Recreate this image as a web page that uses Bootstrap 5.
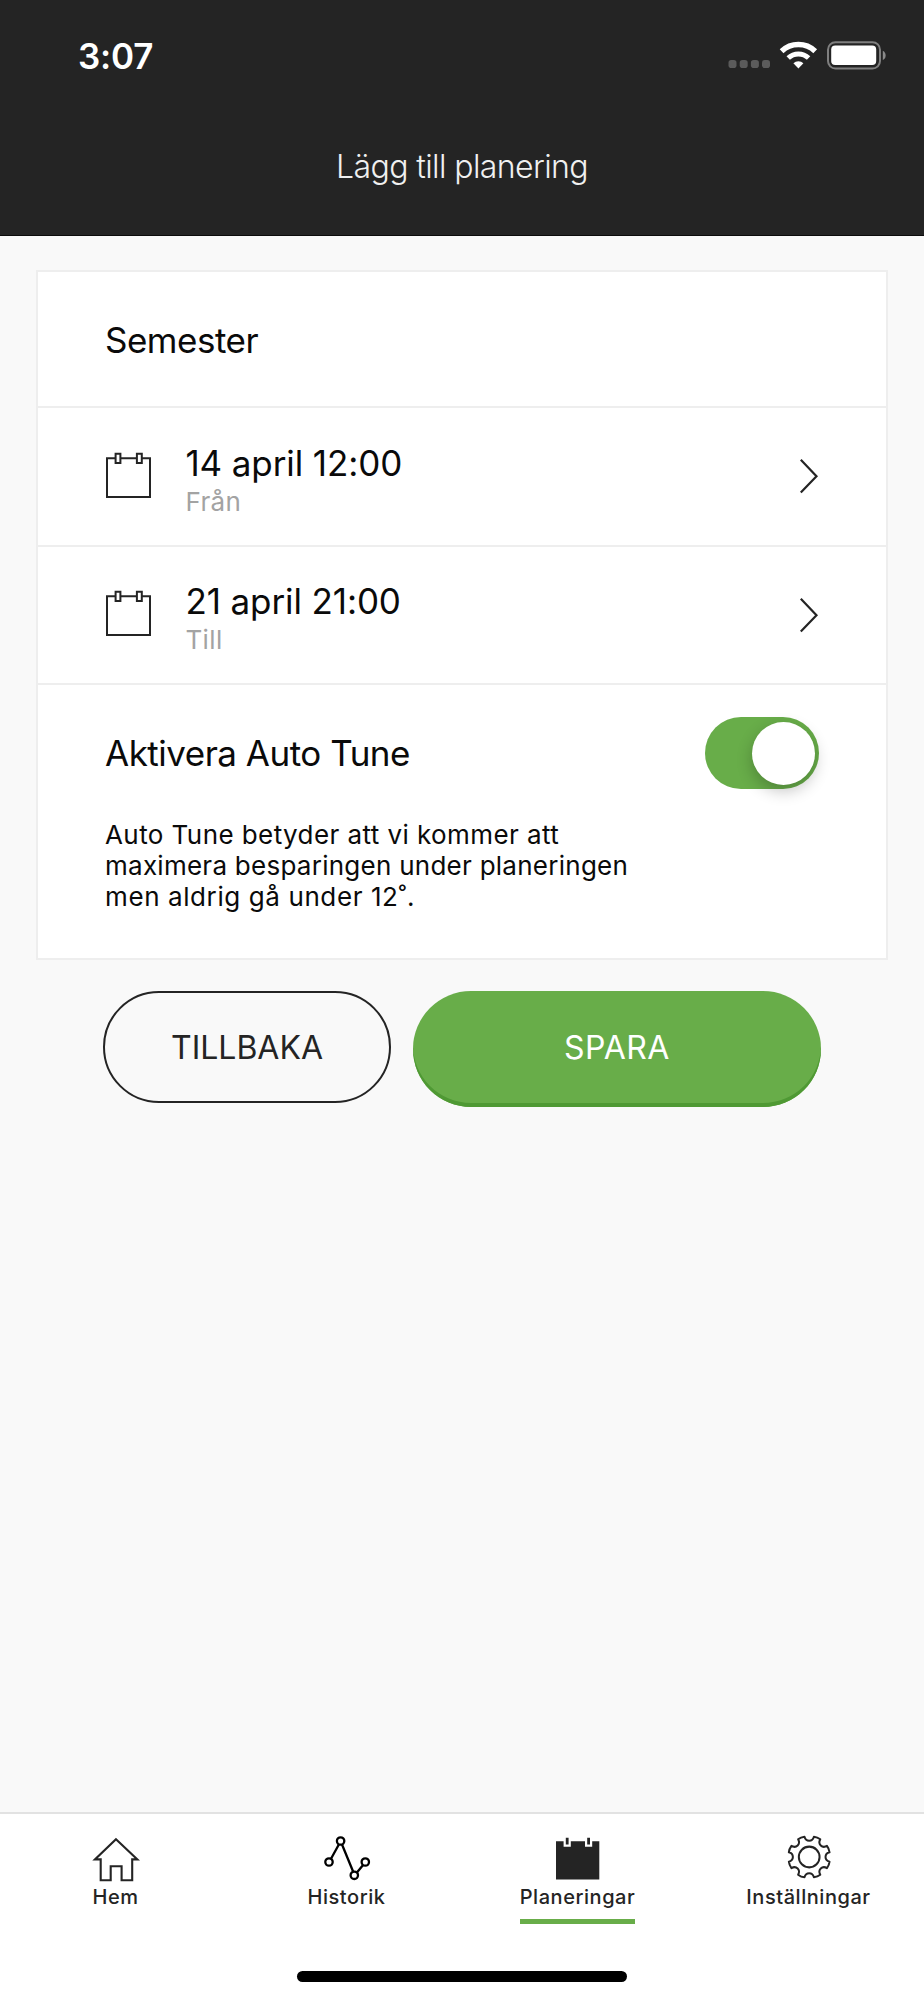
<!DOCTYPE html>
<html lang="sv">
<head>
<meta charset="utf-8">
<meta name="viewport" content="width=device-width, initial-scale=1">
<title>Lägg till planering</title>
<link rel="stylesheet" href="https://cdn.jsdelivr.net/npm/bootstrap@5.3.0/dist/css/bootstrap.min.css">
<style>
  body { font-family: Inter, "Liberation Sans", sans-serif; background: #f9f9f9; color: #0a0a0a; height: 2000px; }
  svg { display: block; flex: none; }
  .app-head { height: 236px; background: #242424; border-bottom: 1px solid #0c0c0c; }
  .status-row { height: 112px; padding: 0 38px 0 78px; }
  .clock { font-size: 35px; font-weight: 600; line-height: 1; letter-spacing: -.2px; }
  .page-title { font-size: 32px; font-weight: 300; line-height: 40px; letter-spacing: -.6px; margin: 35px 0 0; color: #f0f0f0; }
  .plan-card { margin: 34px 36px 0; border: 2px solid #eee; border-radius: 0; background: #fff; }
  .plan-row { border-bottom: 2px solid #eee; padding: 0 67px; }
  .row-name { height: 136px; padding-top: 2px; }
  .row-date { height: 138.5px; }
  .row-tune { height: 273px; padding: 32px 67px 0; }
  .big-text { font-size: 35px; line-height: 42px; }
  .tight { letter-spacing: -.5px; }
  .date-text { letter-spacing: -.1px; }
  .date-col { margin: 7px 0 0 32.4px; }
  .date-icon { margin-bottom: 1px; }
  .sub-text { font-size: 26px; line-height: 32px; letter-spacing: .4px; color: #a3a3a3; margin-top: 2px; }
  .note-text { font-size: 26px; line-height: 31px; letter-spacing: .26px; margin: 30px 0 0; }
  .note-start { letter-spacing: .42px; }
  .note-end { letter-spacing: .6px; }
  .toggle-track { width: 114px; height: 72px; border-radius: 36px; background: #68ad49; padding: 0 4.5px; }
  .toggle-knob { width: 63px; height: 63px; border-radius: 50%; background: #fff; box-shadow: 0 6px 16px rgba(0,0,0,.24); }
  .action-row { padding: 31px 103px 0; gap: 22px; }
  .pill { border: 0; border-radius: 56px; font-size: 32px; padding: 0; height: 112px; }
  .pill-back { width: 288px; border: 2px solid #242424; line-height: 110px; color: #242424; background: transparent; }
  .pill-save { width: 408px; height: 116px; line-height: 114px; padding-bottom: 2px; border-radius: 58px; background: #68ad49; color: #fff; letter-spacing: .5px; box-shadow: inset 0 -4px 0 #4f9934; }
  .tab-bar { height: 188px; border-top: 2px solid #e2e2e2; background: #fff; padding-top: 20px; }
  .tab-name { font-size: 20px; font-weight: 500; line-height: 24px; letter-spacing: .55px; margin-top: 3px; color: #242424; }
  .tab-line { width: 115px; height: 5px; margin-top: 10px; background: #68ad49; }
  .home-bar { width: 330px; height: 11px; margin-bottom: 18px; border-radius: 6px; background: #000; }
</style>
</head>
<body class="d-flex flex-column m-0">

<header class="app-head text-white text-center">
  <div class="status-row d-flex align-items-center justify-content-between">
    <span class="clock">3:07</span>
    <svg width="160" height="32" viewBox="0 0 160 32">
      <g fill="#5b5b5b">
        <rect x="2.5" y="20" width="8" height="8" rx="2.8"/><rect x="13.7" y="20" width="8" height="8" rx="2.8"/>
        <rect x="24.9" y="20" width="8" height="8" rx="2.8"/><rect x="36" y="20" width="8" height="8" rx="2.8"/>
      </g>
      <g fill="none" stroke="#fff">
        <path d="M55.6 11.2 A24.3 24.3 0 0 1 89.2 11.2" stroke-width="5.4"/>
        <path d="M62.2 18 A15 15 0 0 1 82.6 18" stroke-width="5"/>
      </g>
      <path d="M72.4 28.4 L67.4 23.2 A7.2 7.2 0 0 1 77.4 23.2 Z" fill="#fff"/>
      <rect x="102" y="2.2" width="52" height="26.4" rx="7.5" fill="none" stroke="#7f7f7f" stroke-width="2"/>
      <rect x="105.2" y="5.6" width="45" height="19.4" rx="4" fill="#fff"/>
      <path d="M156.8 10.8 C160.6 12.4 160.6 18.4 156.8 20 Z" fill="#8a8a8a"/>
    </svg>
  </div>
  <h1 class="page-title">Lägg till planering</h1>
</header>

<main class="flex-grow-1">
  <section class="plan-card">
    <div class="plan-row row-name d-flex align-items-center"><span class="big-text tight">Semester</span></div>

    <div class="plan-row row-date d-flex align-items-center">
      <svg class="date-icon" width="48" height="48" viewBox="0 0 48 48" fill="none" stroke="#242424" stroke-width="2">
        <path d="M10.6 6.3H2V45H45V6.3H36.8M15.4 6.3H31.9"/><path d="M10.6 1.7H15.4V11H10.6ZM31.9 1.7H36.8V11H31.9Z"/>
      </svg>
      <div class="date-col flex-grow-1">
        <div class="big-text date-text">14 april 12:00</div>
        <div class="sub-text">Från</div>
      </div>
      <svg width="20" height="36" viewBox="0 0 20 36" fill="none" stroke="#242424" stroke-width="2.2"><path d="M1.8 1.8 L17.5 18.2 L1.8 34.6"/></svg>
    </div>

    <div class="plan-row row-date d-flex align-items-center">
      <svg class="date-icon" width="48" height="48" viewBox="0 0 48 48" fill="none" stroke="#242424" stroke-width="2">
        <path d="M10.6 6.3H2V45H45V6.3H36.8M15.4 6.3H31.9"/><path d="M10.6 1.7H15.4V11H10.6ZM31.9 1.7H36.8V11H31.9Z"/>
      </svg>
      <div class="date-col flex-grow-1">
        <div class="big-text date-text">21 april 21:00</div>
        <div class="sub-text">Till</div>
      </div>
      <svg width="20" height="36" viewBox="0 0 20 36" fill="none" stroke="#242424" stroke-width="2.2"><path d="M1.8 1.8 L17.5 18.2 L1.8 34.6"/></svg>
    </div>

    <div class="row-tune">
      <div class="d-flex align-items-center justify-content-between">
        <span class="big-text tight">Aktivera Auto Tune</span>
        <div class="toggle-track d-flex align-items-center justify-content-end" role="switch" aria-checked="true">
          <div class="toggle-knob"></div>
        </div>
      </div>
      <p class="note-text"><span class="note-start">Auto Tune betyder att vi kommer att</span><br>maximera besparingen under planeringen<br><span class="note-end">men aldrig gå under 12˚.</span></p>
    </div>
  </section>

  <div class="action-row d-flex align-items-start">
    <button class="btn pill pill-back">TILLBAKA</button>
    <button class="btn pill pill-save">SPARA</button>
  </div>
</main>

<footer class="tab-bar d-flex flex-column align-items-center">
  <nav class="row g-0 w-100">
    <div class="col-3 d-flex flex-column align-items-center">
      <svg width="48" height="48" viewBox="0 0 48 48" fill="none" stroke="#242424" stroke-width="2.1">
        <path d="M24 5.2 L45.4 25.4 H40.2 V46.3 H29.6 V32.2 H18.7 V46.3 H8.7 V25.4 H2.9 Z"/>
      </svg>
      <span class="tab-name">Hem</span>
    </div>
    <div class="col-3 d-flex flex-column align-items-center">
      <svg width="48" height="48" viewBox="0 0 48 48" fill="none" stroke="#000" stroke-width="2.3">
        <path d="M8 24.8 L16 10.2 M19 10.5 L30.2 37.8 M33.9 38.4 L40.1 30.9"/>
        <circle cx="6" cy="28" r="3.7"/><circle cx="17.6" cy="7" r="3.7"/><circle cx="31.3" cy="41.3" r="3.7"/><circle cx="42.3" cy="28" r="3.7"/>
      </svg>
      <span class="tab-name">Historik</span>
    </div>
    <div class="col-3 d-flex flex-column align-items-center">
      <svg width="48" height="48" viewBox="0 0 48 48">
        <path d="M2 7.3 H9.6 V12.7 H16.8 V7.3 H31 V12.7 H38.2 V7.3 H45.3 V45.5 H2 Z" fill="#242424"/>
        <path d="M11.8 3.8 H14.6 V10.6 H11.8 Z M33.2 3.8 H36 V10.6 H33.2 Z" fill="#242424"/>
      </svg>
      <span class="tab-name">Planeringar</span>
      <div class="tab-line"></div>
    </div>
    <div class="col-3 d-flex flex-column align-items-center">
      <svg width="48" height="48" viewBox="0 0 48 48" fill="none" stroke="#242424" stroke-width="2.1" stroke-linejoin="round">
        <g transform="translate(24.2 23) scale(.96)">
          <path d="M-4.9 -21.2 C-3.4 -15.6 3.4 -15.6 4.9 -21.2 Q8.5 -20.8 11.55 -18.49 C8.63 -13.44 13.44 -8.63 18.49 -11.55 Q20.7 -8.7 21.2 -4.9 C15.6 -3.4 15.6 3.4 21.2 4.9 Q20.8 8.5 18.49 11.55 C13.44 8.63 8.63 13.44 11.55 18.49 Q8.7 20.7 4.9 21.2 C3.4 15.6 -3.4 15.6 -4.9 21.2 Q-8.5 20.8 -11.55 18.49 C-8.63 13.44 -13.44 8.63 -18.49 11.55 Q-20.7 8.7 -21.2 4.9 C-15.6 3.4 -15.6 -3.4 -21.2 -4.9 Q-20.8 -8.5 -18.49 -11.55 C-13.44 -8.63 -8.63 -13.44 -11.55 -18.49 Q-8.7 -20.7 -4.9 -21.2 Z"/>
          <circle r="10.8"/>
        </g>
      </svg>
      <span class="tab-name">Inställningar</span>
    </div>
  </nav>
  <div class="home-bar mt-auto"></div>
</footer>

<script src="https://cdn.jsdelivr.net/npm/bootstrap@5.3.0/dist/js/bootstrap.bundle.min.js"></script>
</body>
</html>
